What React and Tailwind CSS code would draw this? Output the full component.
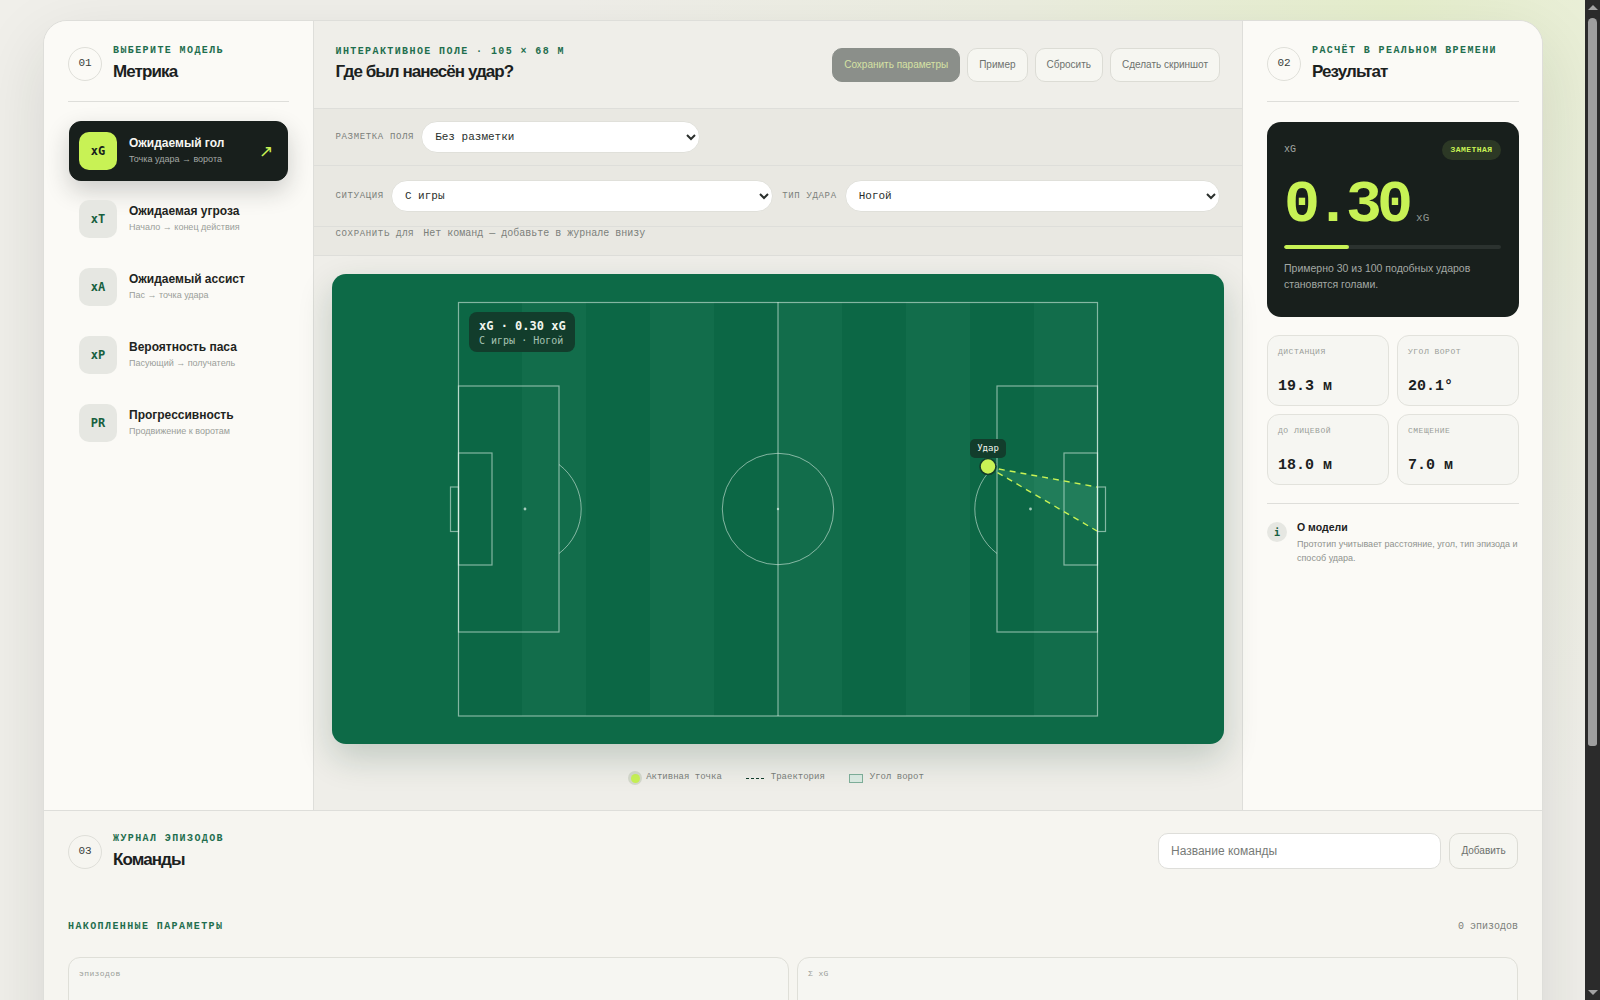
import React from "react";

function SectionHead({ n, label, title }) {
  return (
    <div className="flex items-center gap-[11px]">
      <div className="w-[34px] h-[34px] rounded-full border border-[#dfdfd9] flex items-center justify-center font-['Liberation_Mono',monospace] text-[11px] text-[#3a3f3c] shrink-0">{n}</div>
      <div className="flex flex-col">
        <div className="font-['Liberation_Mono',monospace] text-[10px] font-bold tracking-[1.4px] text-[#1f6e4e] leading-[12px] uppercase whitespace-nowrap">{label}</div>
        <div className="text-[17px] font-bold tracking-[-0.9px] text-[#1b211e] leading-[20px] mt-[5px]">{title}</div>
      </div>
    </div>
  );
}

const models = [
  ["xG", "Ожидаемый гол", "Точка удара → ворота", true],
  ["xT", "Ожидаемая угроза", "Начало → конец действия"],
  ["xA", "Ожидаемый ассист", "Пас → точка удара"],
  ["xP", "Вероятность паса", "Пасующий → получатель"],
  ["PR", "Прогрессивность", "Продвижение к воротам"],
];

function ModelItem({ code, title, sub, active }) {
  return (
    <div className={active ? "h-[60px] mx-[1px] rounded-[12px] border border-[#181f1c] bg-[#181f1c] px-[9px] py-[10px] flex items-center gap-3 shadow-[0_10px_24px_rgba(24,31,28,0.2)]" : "h-[60px] rounded-[12px] border border-transparent p-[10px] flex items-center gap-3"}>
      <div className={active ? "w-[38px] h-[38px] rounded-[10px] bg-[#c8f255] text-[#181f1c] flex items-center justify-center font-['DejaVu_Sans_Mono',monospace] font-bold text-[12px]" : "w-[38px] h-[38px] rounded-[10px] bg-[#e6e7e2] text-[#17603f] flex items-center justify-center font-['DejaVu_Sans_Mono',monospace] font-bold text-[12px]"}>{code}</div>
      <div className="flex-1 min-w-0 -mt-[2px]">
        <div className={active ? "text-[12px] font-bold text-[#f6f6f2] leading-[16px]" : "text-[12px] font-bold text-[#1e2421] leading-[16px]"}>{title}</div>
        <div className={active ? "text-[9px] text-[#a3a8a4] leading-[12px] mt-[2px] whitespace-nowrap" : "text-[9px] text-[#9a9e99] leading-[12px] mt-[2px] whitespace-nowrap"}>{sub}</div>
      </div>
      {active && <div className="text-[#c8f255] text-[17px] leading-none mr-[5px]">↗</div>}
    </div>
  );
}

function Btn({ children, className = "" }) {
  return <button className={"h-[34px] px-[11px] rounded-[10px] border border-[#dcdcd5] bg-[#f6f6f1] text-[10px] text-[#6d716d] whitespace-nowrap " + className}>{children}</button>;
}

function Label({ children, className = "" }) {
  return <span className={"font-['Liberation_Mono',monospace] text-[9px] tracking-[0.65px] uppercase text-[#7b7f7a] whitespace-nowrap " + className}>{children}</span>;
}

function Select({ children, className = "" }) {
  return (
    <select className={"h-[32px] rounded-full border border-[#e0e0da] bg-white pl-[9px] pr-1 font-['Liberation_Mono',monospace] text-[11px] text-[#2a2f2c] " + className}>
      <option>{children}</option>
    </select>
  );
}

function Pitch() {
  const line = "#e6f5ec";
  return (
    <svg width="892" height="470" viewBox="0 0 892 470" className="block">
      <g transform="translate(-332 -274)">
        {[458, 586, 714, 842, 970].map((x) => (
          <rect key={x} x={x} y="302" width="64" height="414" fill="#000000" opacity="0.02" />
        ))}
        {[522, 650, 778, 906, 1034].map((x) => (
          <rect key={x} x={x} y="302" width={x === 1034 ? 63 : 64} height="414" fill="#ffffff" opacity="0.025" />
        ))}
        <g fill="none" stroke={line} strokeOpacity="0.55" strokeWidth="1.2">
          <rect x="458.5" y="302.5" width="639" height="413.5" />
          <line x1="778" y1="302" x2="778" y2="716" />
          <circle cx="778" cy="509" r="55.7" strokeWidth="1" />
          <rect x="458.5" y="386" width="100.5" height="246" />
          <rect x="458.5" y="453" width="33.5" height="112" />
          <rect x="450.5" y="487" width="8" height="44.5" />
          <rect x="997" y="386" width="100.5" height="246" />
          <rect x="1064" y="453" width="33.5" height="112" />
          <rect x="1097.5" y="487" width="8" height="44.5" />
          <path d="M559 464.5 A55.7 55.7 0 0 1 559 553.5" strokeWidth="1" />
          <path d="M997 464.5 A55.7 55.7 0 0 0 997 553.5" strokeWidth="1" />
        </g>
        <circle cx="525" cy="509" r="1.4" fill="#e6f5ec" fillOpacity="0.7" />
        <circle cx="778" cy="509" r="1.2" fill="#e6f5ec" fillOpacity="0.7" />
        <circle cx="1030.5" cy="509" r="1.4" fill="#e6f5ec" fillOpacity="0.7" />
        <polygon points="988,467 1097,487 1097,531" fill="#7fe3b8" fillOpacity="0.14" />
        <g stroke="#c8f255" strokeWidth="1.4" strokeDasharray="6 5">
          <line x1="988" y1="467" x2="1097" y2="487" />
          <line x1="988" y1="467" x2="1097" y2="531" />
        </g>
        <circle cx="988" cy="466.5" r="8" fill="#c8f255" stroke="#123d2c" strokeWidth="1.6" />
      </g>
    </svg>
  );
}

function Stat({ label, value }) {
  return (
    <div className="h-[71px] rounded-[12px] border border-[#e2e2dc] bg-[#f6f6f2] px-[10px] pt-[10px]">
      <div className="font-['Liberation_Mono',monospace] text-[8px] tracking-[0.5px] uppercase text-[#9a9e99] leading-[12px]">{label}</div>
      <div className="font-['Liberation_Mono',monospace] text-[15px] font-bold text-[#1b211e] leading-[18px] mt-[20px]">{value}</div>
    </div>
  );
}

function Acc({ label, value }) {
  return (
    <div className="h-[71px] rounded-[12px] border border-[#dfdfd8] bg-[#f6f6f2] px-[10px] pt-[10px]">
      <div className="font-['Liberation_Mono',monospace] text-[8px] tracking-[0.4px] text-[#9a9e99] leading-[12px]">{label}</div>
      <div className="font-['Liberation_Mono',monospace] text-[15px] font-bold text-[#1b211e] leading-[18px] mt-[24px]">{value}</div>
    </div>
  );
}

function FakeScrollbar() {
  return (
    <div className="w-[15px] shrink-0 h-screen bg-[#2b2b2b] flex flex-col items-center">
      <div className="h-[15px] flex items-center justify-center">
        <div className="w-0 h-0 border-x-[5px] border-x-transparent border-b-[5px] border-b-[#a3a3a3]" />
      </div>
      <div className="w-[9px] h-[728px] mt-[3px] rounded-t-[5px] rounded-b-[3px] bg-[#9f9f9f]" />
      <div className="mt-auto h-[15px] flex items-center justify-center">
        <div className="w-0 h-0 border-x-[5px] border-x-transparent border-t-[5px] border-t-[#a3a3a3]" />
      </div>
    </div>
  );
}

export default function App() {
  return (
    <div className="h-screen flex overflow-hidden font-['Liberation_Sans',sans-serif]">
      <div className="flex-1 min-w-0 h-screen overflow-y-auto [scrollbar-width:none] bg-[radial-gradient(circle_at_88%_0%,#e6efcd_0%,#eceee0_22%,#f0efea_48%)]">
        <div className="pl-[43px] pr-[42px] pt-[20px] pb-[40px]">
          <div className="rounded-[24px] border border-[#dededa] bg-[#f6f5f0] overflow-hidden shadow-[0_24px_70px_rgba(24,31,28,0.12)]">
            <div className="grid grid-cols-[270px_1fr_300px] h-[789px]">
              {/* left */}
              <aside className="bg-[#fbfaf6] border-r border-[#dededa] px-[24px] pt-[24px]">
                <div className="pb-[19px] border-b border-[#dededa]">
                  <SectionHead n="01" label="Выберите модель" title="Метрика" />
                </div>
                <div className="flex flex-col gap-2 mt-[19px]">
                  {models.map(([c, t, s, a]) => <ModelItem key={c} code={c} title={t} sub={s} active={a} />)}
                </div>
              </aside>

              {/* center */}
              <main className="bg-[#efeee9] flex flex-col min-w-0">
                <div className="h-[88px] border-b border-[#dededa] pl-[21.5px] pr-[22px] flex items-center justify-between">
                  <div>
                    <div className="font-['Liberation_Mono',monospace] text-[10px] font-bold tracking-[1.4px] text-[#1f6e4e] leading-[12px] uppercase">Интерактивное поле · 105 × 68 м</div>
                    <div className="text-[17px] font-bold tracking-[-0.95px] text-[#1b211e] leading-[22px] mt-[3px]">Где был нанесён удар?</div>
                  </div>
                  <div className="flex gap-[7px]">
                    <Btn className="!bg-[#8b8f8a] !border-[#8b8f8a] !text-[#d6e2a4]">Сохранить параметры</Btn>
                    <Btn>Пример</Btn>
                    <Btn>Сбросить</Btn>
                    <Btn>Сделать скриншот</Btn>
                  </div>
                </div>
                <div className="h-[57px] bg-[#e9e8e2] border-b border-[#dededa] pl-[21.5px] flex items-center gap-[7px]">
                  <Label className="mt-[2px]">Разметка поля</Label>
                  <Select className="w-[279px]">Без разметки</Select>
                </div>
                <div className="h-[61px] bg-[#e9e8e2] border-b border-[#dededa] pl-[21.5px] pr-[22px] flex items-center gap-[9px]">
                  <div className="flex-1 min-w-0 flex items-center gap-[7px]">
                    <Label className="mt-[2px]">Ситуация</Label>
                    <Select className="flex-1 min-w-0">С игры</Select>
                  </div>
                  <div className="flex-1 min-w-0 flex items-center gap-[8px]">
                    <Label className="mt-[2px]">Тип удара</Label>
                    <Select className="flex-1 min-w-0">Ногой</Select>
                  </div>
                </div>
                <div className="h-[29px] bg-[#e9e8e2] border-b border-[#dededa] pl-[21.5px] pt-[1px] flex items-start gap-[9px]">
                  <Label className="leading-[12px]">Сохранить для</Label>
                  <span className="font-['Liberation_Mono',monospace] text-[10px] text-[#7b7f7a] leading-[12px]">Нет команд — добавьте в журнале внизу</span>
                </div>
                <div className="flex-1 px-[18px] pt-[18px]">
                  <div className="relative h-[470px] rounded-[14px] bg-[#0d6a47] overflow-hidden shadow-[0_14px_34px_rgba(15,60,40,0.2)]">
                    <Pitch />
                    <div className="absolute left-[137px] top-[38px] w-[106px] h-[40px] rounded-[8px] bg-[#123d2c] px-[10px] pt-[7px] font-['DejaVu_Sans_Mono',monospace] whitespace-nowrap">
                      <div className="text-[12px] font-bold text-[#f1f5ee] leading-[15px]">xG · 0.30 xG</div>
                      <div className="text-[10px] text-[#a5c3b2] leading-[13px]">С игры · Ногой</div>
                    </div>
                    <div className="absolute left-[638px] top-[165px] w-[36px] h-[19px] rounded-[5px] bg-[#123d2c] flex items-center justify-center font-['DejaVu_Sans_Mono',monospace] text-[9px] text-[#f1f5ee]">Удар</div>
                  </div>
                  <div className="flex justify-center items-center gap-[24px] mt-[27px] font-['Liberation_Mono',monospace] text-[9px] text-[#7b7f7a] pr-[4px]">
                    <div className="flex items-center gap-[4px]">
                      <span className="w-[14px] h-[14px] rounded-full bg-[#d5d9cc] flex items-center justify-center"><span className="w-[9px] h-[9px] rounded-full bg-[#c8f255]" /></span>
                      Активная точка
                    </div>
                    <div className="flex items-center gap-[7px]">
                      <span className="w-[18px] border-t border-dashed border-[#123d2c]" />
                      Траектория
                    </div>
                    <div className="flex items-center gap-[7px]">
                      <span className="w-[14px] h-[9px] border border-[#7fb09a] bg-[#dcebe3]" />
                      Угол ворот
                    </div>
                  </div>
                </div>
              </main>

              {/* right */}
              <aside className="bg-[#fbfaf6] border-l border-[#dededa] pl-[24px] pr-[23px] pt-[24px]">
                <div className="pb-[19px] border-b border-[#dededa]">
                  <SectionHead n="02" label="Расчёт в реальном времени" title="Результат" />
                </div>
                <div className="mt-[20px] h-[195px] rounded-[14px] bg-[#181f1c] pl-[17px] pr-[18px] pt-[18px]">
                  <div className="flex items-start justify-between">
                    <span className="font-['Liberation_Mono',monospace] text-[10px] text-[#a3a8a4] leading-[16px] mt-[2px]">xG</span>
                    <span className="h-[20px] rounded-full bg-[#2c3825] px-[8.5px] flex items-center font-['Liberation_Mono',monospace] text-[8px] font-bold tracking-[0.45px] text-[#c8f255]">ЗАМЕТНАЯ</span>
                  </div>
                  <div className="flex items-end gap-[7px] mt-[16px]">
                    <span className="font-['Liberation_Mono',monospace] text-[60px] font-bold tracking-[-5px] text-[#c8f255] leading-[58px]">0.30</span>
                    <span className="font-['Liberation_Mono',monospace] text-[11px] text-[#8f9591] leading-[14px] mb-[9px] ml-[1px]">xG</span>
                  </div>
                  <div className="h-[4px] rounded-full bg-[#2b322f] mt-[11px] overflow-hidden">
                    <div className="h-full rounded-full bg-[#c8f255]" style={{ width: "30%" }} />
                  </div>
                  <div className="text-[10.5px] leading-[16px] text-[#a3a8a4] mt-[11px]">Примерно 30 из 100 подобных ударов становятся голами.</div>
                </div>
                <div className="grid grid-cols-2 gap-2 mt-[18px]">
                  <Stat label="Дистанция" value="19.3 м" />
                  <Stat label="Угол ворот" value="20.1°" />
                  <Stat label="До лицевой" value="18.0 м" />
                  <Stat label="Смещение" value="7.0 м" />
                </div>
                <div className="mt-[18px] border-t border-[#dededa] pt-[18px] flex gap-[10px]">
                  <div className="w-[20px] h-[20px] rounded-full bg-[#e6e7e2] text-[#17603f] flex items-center justify-center font-['DejaVu_Sans_Mono',monospace] font-bold text-[10px] shrink-0">i</div>
                  <div className="-mt-[2px]">
                    <div className="text-[10.5px] font-bold text-[#1b211e] leading-[14px]">О модели</div>
                    <div className="text-[9px] text-[#8f938e] leading-[14px] mt-[3px]">Прототип учитывает расстояние, угол, тип эпизода и способ удара.</div>
                  </div>
                </div>
              </aside>
            </div>

            {/* bottom */}
            <section className="border-t border-[#dededa] px-[24px] pt-[22px] pb-[36px]">
              <div className="flex items-center justify-between">
                <SectionHead n="03" label="Журнал эпизодов" title="Команды" />
                <div className="flex gap-2 -mt-[2px]">
                  <input placeholder="Название команды" className="w-[283px] h-[36px] rounded-[10px] border border-[#dededa] bg-white px-[12px] text-[12px] text-[#1b211e] placeholder:text-[#777b77]" />
                  <Btn className="!h-[36px] w-[69px] !px-0">Добавить</Btn>
                </div>
              </div>
              <div className="flex items-center justify-between mt-[51px]">
                <div className="font-['Liberation_Mono',monospace] text-[10px] font-bold tracking-[1.4px] text-[#1f6e4e] leading-[12px] uppercase">Накопленные параметры</div>
                <div className="font-['Liberation_Mono',monospace] text-[10px] text-[#7b7f7a] leading-[12px]">0 эпизодов</div>
              </div>
              <div className="grid grid-cols-2 gap-2 mt-[24px]">
                <Acc label="эпизодов" value="0" />
                <Acc label="Σ xG" value="0.00" />
              </div>
              <div className="grid grid-cols-2 gap-2 mt-2">
                <Acc label="Σ xT" value="0.00" />
                <Acc label="Σ xA" value="0.00" />
              </div>
              <div className="mt-[24px] rounded-[12px] border border-dashed border-[#dfdfd8] h-[120px] flex items-center justify-center font-['Liberation_Mono',monospace] text-[10px] text-[#7b7f7a]">Нет команд</div>
            </section>
          </div>
        </div>
      </div>
      <FakeScrollbar />
    </div>
  );
}
